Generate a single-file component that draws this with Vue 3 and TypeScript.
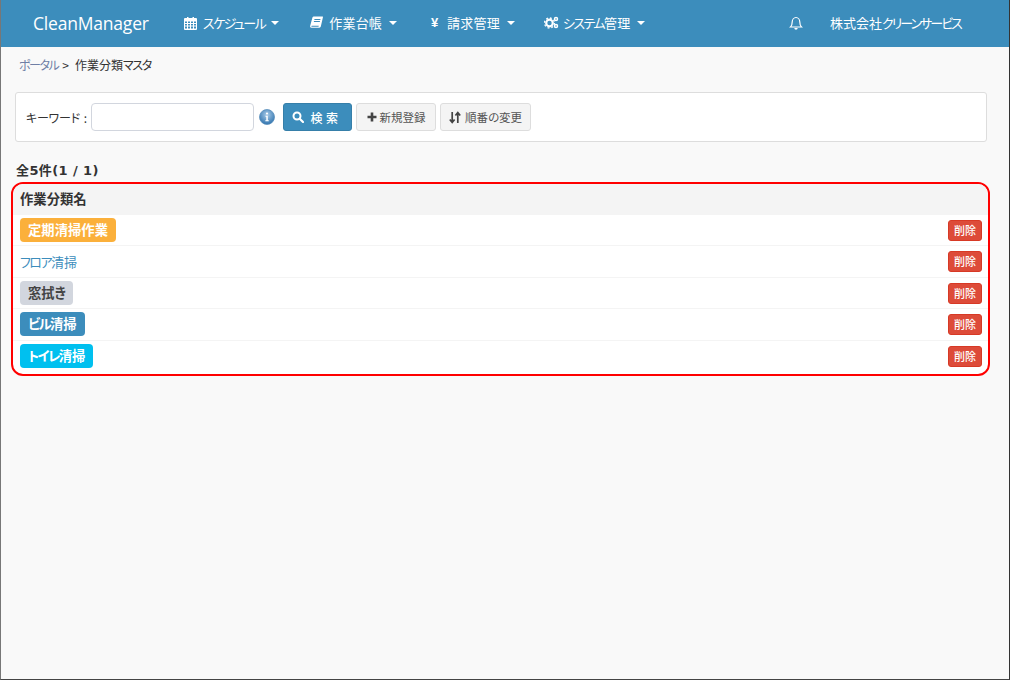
<script setup lang="ts">
import { h } from 'vue'

interface Row { name: string; kind: string }
const rows: Row[] = [
  { name: '定期清掃作業', kind: 'orange' },
  { name: 'フロア清掃', kind: 'link' },
  { name: '窓拭き', kind: 'gray' },
  { name: 'ビル清掃', kind: 'blue' },
  { name: 'トイレ清掃', kind: 'cyan' },
]
const menus = [
  { label: 'スケジュール', icon: 'cal' },
  { label: '作業台帳', icon: 'book' },
  { label: '請求管理', icon: 'yen' },
  { label: 'システム管理', icon: 'cogs' },
]

// The source font sets kana narrower than kanji; split the runs so each can be spaced on its own.
const T = (props: { t: string }) =>
  (props.t.match(/[\u3040-\u30ff]+|[^\u3040-\u30ff]+/g) ?? []).map((s) =>
    h('span', { class: /^[\u3040-\u30ff]/.test(s) ? 'kana' : undefined }, s),
  )
T.props = ['t']
</script>

<template>
  <div class="page">
    <header class="nav">
      <div class="brand">CleanManager</div>
      <nav class="menus">
        <div v-for="m in menus" :key="m.label" class="menu" :class="'m-' + m.icon">
          <span class="icbox">
            <svg v-if="m.icon === 'cal'" width="13" height="14" viewBox="0 0 13 14">
              <path fill="#fff" fill-rule="evenodd" d="M1 2h2V1h1.500v1h4V1H10v1h2a1 1 0 0 1 1 1v10a1 1 0 0 1-1 1H1a1 1 0 0 1-1-1V3a1 1 0 0 1 1-1zM1 5.500V7h2V5.500zM4 5.500V7h2V5.500zM7 5.500V7h2V5.500zM10 5.500V7h2V5.500zM1 8v1.500h2V8zM4 8v1.500h2V8zM7 8v1.500h2V8zM10 8v1.500h2V8zM1 10.500V12.500h2V10.500zM4 10.500V12.500h2V10.500zM7 10.500V12.500h2V10.500zM10 10.500V12.500h2V10.500z"/>
            </svg>
            <svg v-else-if="m.icon === 'book'" width="13" height="13" viewBox="0 0 13 13">
              <path fill="#fff" d="M3.500 0.500H12.500a.5.500 0 0 1 .5.600L10.800 10.500a1.500 1.500 0 0 1-1.400 1.200H1.800a1.600 1.600 0 0 1-1.600-2L2.300 2a2 2 0 0 1 1.200-1.500z"/>
              <path fill="#3c8dbc" d="M4.500 3h6l-.2 1h-6zM4 5h6l-.2 1h-6zM1.800 9.800h7l-.3 1H2a.5.500 0 0 1-.2-1z"/>
            </svg>
            <span v-else-if="m.icon === 'yen'" class="yen">¥</span>
            <svg v-else width="15" height="13" viewBox="0 0 15 13">
              <circle cx="5.500" cy="7" r="3.300" fill="none" stroke="#fff" stroke-width="2.200"/>
              <circle cx="5.500" cy="7" r="5" fill="none" stroke="#fff" stroke-width="1.300" stroke-dasharray="1.900 2"/>
              <circle cx="12" cy="3" r="1.500" fill="none" stroke="#fff" stroke-width="1.500"/>
              <circle cx="12" cy="10" r="1.500" fill="none" stroke="#fff" stroke-width="1.500"/>
            </svg>
          </span>
          <span class="mlabel"><T :t="m.label" /></span>
          <span class="caret"></span>
        </div>
      </nav>
      <div class="right">
        <svg class="bell" width="14" height="14" viewBox="0 0 14 14">
          <path fill="none" stroke="#fff" stroke-width="1.200" d="M1.500 11c1.300-1.200 1.700-2.500 1.700-5C3.200 3.500 5 1.500 7 1.500s3.800 2 3.800 4.500c0 2.500.4 3.800 1.700 5z"/>
          <path fill="#fff" d="M5.300 12h3.400a1.700 1.700 0 0 1-3.400 0z"/>
        </svg>
        <span class="company"><T t="株式会社クリーンサービス" /></span>
      </div>
    </header>

    <main class="main">
      <div class="crumb"><a><T t="ポータル" /></a><span class="sep">&gt;</span><span><T t="作業分類マスタ" /></span></div>

      <section class="search">
        <label class="kw"><T t="キーワード" /><span class="colon">:</span></label>
        <input class="input" type="text" />
        <svg class="info" width="16" height="16" viewBox="0 0 16 16">
          <defs>
            <radialGradient id="ig" cx="50%" cy="35%" r="65%">
              <stop offset="0" stop-color="#a9cbe8"/>
              <stop offset="1" stop-color="#2f73ae"/>
            </radialGradient>
          </defs>
          <circle cx="8" cy="8" r="7.500" fill="url(#ig)" stroke="#5a8fbd" stroke-width=".8"/>
          <circle cx="8" cy="4.500" r="1.100" fill="#fff"/>
          <path d="M6.500 6.800h2.300v4.400h1v1H6.300v-1h1V7.800h-.8z" fill="#fff"/>
        </svg>
        <button class="btn primary">
          <svg width="12" height="12" viewBox="0 0 12 12"><circle cx="5" cy="5" r="3.500" fill="none" stroke="#fff" stroke-width="2"/><path d="M7.700 7.700 11 11" stroke="#fff" stroke-width="2.200" stroke-linecap="round"/></svg>
          <span class="spaced">検 索</span>
        </button>
        <button class="btn add">
          <svg width="10" height="10" viewBox="0 0 10 10"><path d="M5 .5v9M.5 5h9" stroke="#444" stroke-width="2.600"/></svg>
          <span>新規登録</span>
        </button>
        <button class="btn order">
          <svg width="12" height="13" viewBox="0 0 12 13"><path d="M3.200 1v10M.8 8.500l2.400 3 2.400-3M8.800 12V2M6.400 4.500l2.400-3 2.400 3" fill="none" stroke="#444" stroke-width="1.700"/></svg>
          <span><T t="順番の変更" /></span>
        </button>
      </section>

      <div class="count">全5件(1 / 1)</div>

      <section class="table">
        <div class="thead">作業分類名</div>
        <div v-for="r in rows" :key="r.name" class="row">
          <a v-if="r.kind === 'link'" class="plain"><T :t="r.name" /></a>
          <span v-else class="badge" :class="r.kind"><T :t="r.name" /></span>
          <button class="del">削除</button>
        </div>
      </section>
    </main>
  </div>
</template>

<style>
html, body { margin: 0; padding: 0; background: #f9f9f9; }
.kana { font-feature-settings: "palt" 1; letter-spacing: -0.12em; }
.kw .kana, .btn .kana { letter-spacing: -0.02em; }
.company .kana { letter-spacing: -0.15em; }
</style>

<style scoped>
* { box-sizing: border-box; }
.page {
  width: 1010px; height: 680px; overflow: hidden;
  background: #f9f9f9;
  border-style: solid; border-width: 0 1px 1px 1px;
  border-color: #444 #333 #444 #777;
  font-family: "Noto Sans CJK JP", "Liberation Sans", sans-serif;
  font-size: 12px; color: #333;
}
.nav { height: 47px; padding-bottom: 2px; background: #3c8dbc; color: #fff; display: flex; align-items: center; }
.brand { margin-left: 32px; width: 151px; font-family: "Open Sans", "Noto Sans", sans-serif; font-size: 17.500px; letter-spacing: -0.200px; }
.menus { display: flex; }
.menu { display: flex; align-items: center; font-size: 13px; margin-right: 31px; white-space: nowrap; }
.m-cal .mlabel { margin-right: -1px; }
.m-book { margin-right: 33px; }
.m-yen { margin-right: 29px; }
.icbox { width: 19px; display: flex; align-items: center; }
.m-yen .icbox { width: 17px; }
.yen { margin-left: 1px; font-family: "Liberation Sans", sans-serif; font-weight: 700; font-size: 13px; line-height: 14px; }
.mlabel { letter-spacing: 0.200px; }
.caret { width: 0; height: 0; margin-left: 7px; border-left: 4px solid transparent; border-right: 4px solid transparent; border-top: 4px solid #fff; }
.right { margin-left: auto; display: flex; align-items: center; padding-right: 48px; }
.bell { margin-right: 27px; }
.company { font-size: 13px; }

.main { padding: 0 22px 0 14px; }
.crumb { height: 45px; padding: 8px 0 0 4px; font-size: 12px; line-height: 20px; }
.crumb a { color: #6f7fa5; }
.sep { margin: 0 6px 0 4px; }
.search {
  height: 50px; background: #fff; border: 1px solid #ddd; border-radius: 3px;
  display: flex; align-items: center; padding-left: 10px;
}
.kw { width: 65px; font-size: 12px; white-space: nowrap; }
.kw .colon { margin-left: 4px; }
.input { width: 163px; height: 28px; border: 1px solid #d2d6de; border-radius: 4px; background: #fff; padding: 0; }
.info { margin-left: 5px; }
.btn {
  height: 28px; margin-left: 4px; padding: 0; display: inline-flex; align-items: center; justify-content: center; gap: 3px;
  background: #f4f4f4; border: 1px solid #ddd; border-radius: 3px; color: #555;
  font-family: inherit; font-size: 11.500px; white-space: nowrap;
}
.btn.add { width: 80px; }
.btn.order { width: 91px; gap: 4px; }
.btn.primary { width: 69px; margin-left: 8px; padding-right: 4px; gap: 6px; background: #3c8dbc; border-color: #367fa9; color: #fff; font-size: 12px; font-weight: 500; }
.spaced { letter-spacing: 0.500px; }
.count { margin-top: 19px; height: 21px; padding-left: 1px; font-family: "DejaVu Sans", "Noto Sans CJK JP", sans-serif; font-size: 13px; font-weight: 700; letter-spacing: 0.400px; line-height: 19px; }
.table {
  width: 979px; height: 194px; margin-left: -4px; background: #fff;
  border: 2px solid #f00; border-radius: 12px; overflow: hidden;
}
.thead { height: 31px; padding-left: 7px; background: #f4f4f4; font-size: 13.330px; font-weight: 700; line-height: 30px; }
.row {
  height: 32px; display: flex; align-items: center; justify-content: space-between;
  padding: 0 6px 1px 7px; border-bottom: 1px solid #f4f4f4;
}
.row:nth-child(even) { height: 31px; padding-bottom: 0; }
.row:last-child { height: 30px; border-bottom: 0; }
.plain { color: #3c8dbc; font-size: 13px; }
.badge { height: 24px; padding: 0 8px; border-radius: 4px; font-size: 13.330px; font-weight: 700; line-height: 23px; color: #fff; }
.orange { background: #fbb03b; }
.gray { background: #d2d6de; color: #444; }
.blue { background: #3c8dbc; }
.cyan { background: #00c0ef; }
.del { width: 34px; height: 21px; padding: 0; border: 1px solid #d73925; border-radius: 3px; background: #dd4b39; color: #fff; font-family: inherit; font-size: 11px; font-weight: 500; line-height: 19px; }
</style>
